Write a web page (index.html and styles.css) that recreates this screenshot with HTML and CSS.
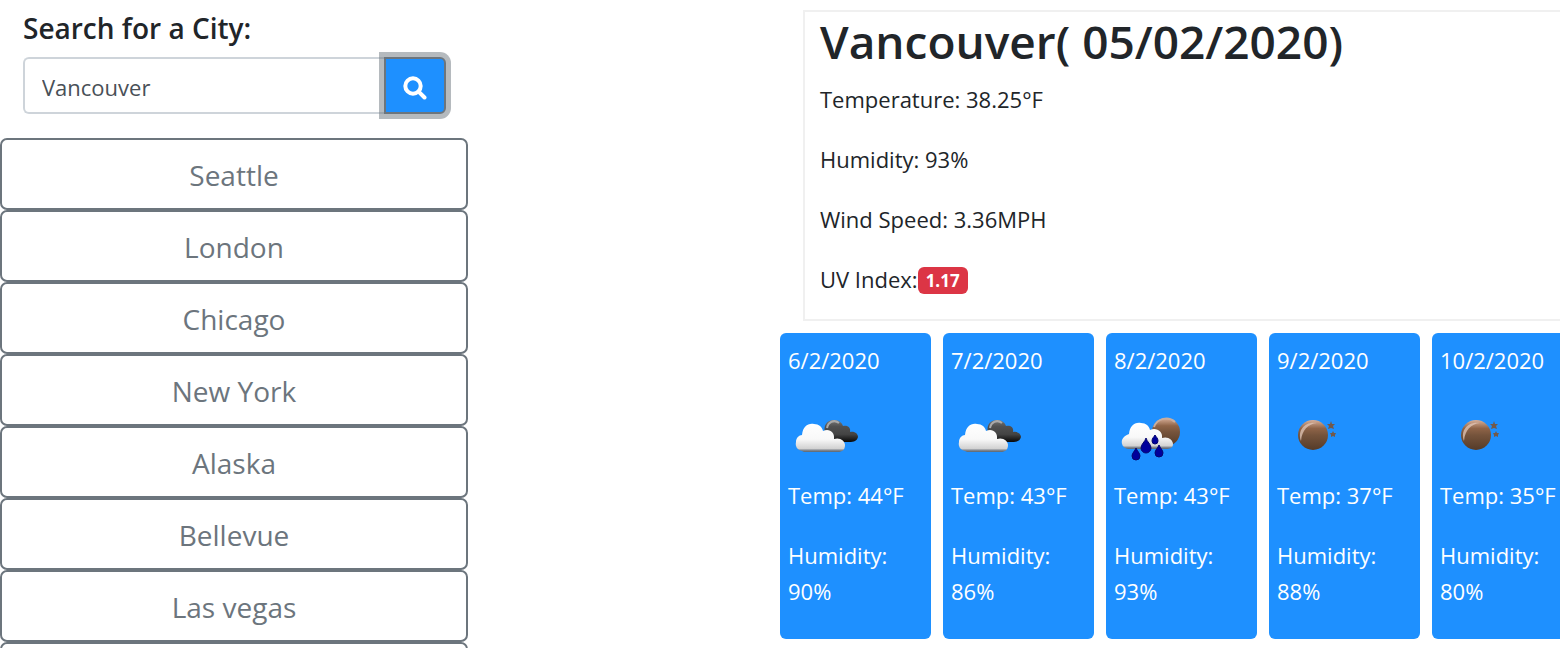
FILE: index.html
```html
<!DOCTYPE html>
<html lang="en">
<head>
<meta charset="utf-8">
<meta name="viewport" content="width=device-width, initial-scale=1">
<title>Weather Dashboard</title>
<link rel="stylesheet" href="styles.css">
</head>
<body>
<svg class="defs" aria-hidden="true">
  <defs>
    <linearGradient id="white" x1="0" y1="0" x2="0" y2="1"><stop offset="0" stop-color="#fff"/><stop offset=".55" stop-color="#f8f8f8"/><stop offset=".88" stop-color="#d2d2d2"/><stop offset=".93" stop-color="#8a8f96"/><stop offset="1" stop-color="#5a6470"/></linearGradient>
    <linearGradient id="dark" x1="0" y1="0" x2="0" y2="1"><stop offset="0" stop-color="#777"/><stop offset=".3" stop-color="#505050"/><stop offset=".65" stop-color="#444"/><stop offset="1" stop-color="#080808"/></linearGradient>
    <linearGradient id="moon" x1="0" y1="0" x2="0" y2="1"><stop offset="0" stop-color="#d9b09a"/><stop offset=".28" stop-color="#8f6448"/><stop offset=".5" stop-color="#76543c"/><stop offset="1" stop-color="#553b29"/></linearGradient>
    <symbol id="cloudy" viewBox="0 0 75 75">
      <path d="M37 32C35 23 39 18 46 18C51 18 54 21 55 24C60 23 63 26 62 30C67 29 70 32 70 35C69 39 66 40 61 40H44Z" fill="url(#dark)"/>
      <path d="M39 26C40 20 46 17 51 21" fill="none" stroke="#aaa" stroke-width="2"/>
      <path d="M14 49C9 48 7 44 8 40C8 36 11 33 14 33C15 24 20 21 26 22C31 22 34 25 35 29C41 26 47 30 46 37C52 35 57 39 57 43C57 48 54 50 50 50H16Z" fill="url(#white)"/>
    </symbol>
    <symbol id="rain" viewBox="0 0 75 75">
      <circle cx="52" cy="30" r="14" fill="url(#moon)"/>
      <path d="M40 25A13 13 0 0 1 61 20" fill="none" stroke="#c8ad9e" stroke-width="2"/>
      <path d="M14 47C9 46 7 42 8 38C9 35 12 33 15 32C16 24 20 20 27 21C32 21 35 24 36 28C42 25 49 29 48 36C54 34 59 38 59 42C59 46 56 47 52 47Z" fill="url(#white)"/>
      <g fill="#00009c" stroke="#05056f" stroke-width="1"><path d="M32 36C33 40 37 42 37 46A5 5 0 0 1 27 46C27 42 31 40 32 36Z"/><path d="M22 46C23 49 26 51 26 54A4 4 0 0 1 18 54C18 51 21 49 22 46Z"/><path d="M45 43C46 46 49 48 49 51A4 4 0 0 1 41 51C41 48 44 46 45 43Z"/><path d="M41 33C42 35 44 36 44 39A3 3 0 0 1 38 39C38 36 40 35 41 33Z"/></g>
    </symbol>
    <symbol id="night" viewBox="0 0 75 75">
      <circle cx="36" cy="33" r="15" fill="url(#moon)"/>
      <path d="M24 39C20 28 28 19 40 21C31 22 25 28 24 39Z" fill="#e3c8ba" opacity=".75"/>
      <path d="M54 19l1 3h3l-2 2 1 3-3-1-3 1 1-3-2-2h3zM56 29l1 2h2l-1 2v2l-2-1-2 1v-2l-1-2h2z" fill="#73594a"/>
    </symbol>
  </defs>
</svg>
<main class="dashboard">
  <aside class="sidebar">
    <form class="search">
      <label class="search-title" for="city">Search for a City:</label>
      <div class="search-group">
        <input class="search-input" id="city" type="text" value="Vancouver">
        <button class="search-button" type="button" aria-label="Search">
          <svg class="search-icon" viewBox="0 0 24 24" aria-hidden="true"><circle cx="10" cy="10" r="7.7"/><path d="M15.6 15.6L21.5 21.5"/></svg>
        </button>
      </div>
    </form>
    <nav class="cities" aria-label="Recent cities">
      <button class="city" type="button">Seattle</button>
      <button class="city" type="button">London</button>
      <button class="city" type="button">Chicago</button>
      <button class="city" type="button">New York</button>
      <button class="city" type="button">Alaska</button>
      <button class="city" type="button">Bellevue</button>
      <button class="city" type="button">Las vegas</button>
      <button class="city" type="button" aria-label="Recent city"></button>
    </nav>
  </aside>
  <section class="weather">
    <article class="current">
      <h1 class="current-title">Vancouver( 05/02/2020)</h1>
      <p class="line">Temperature: 38.25°F</p>
      <p class="line">Humidity: 93%</p>
      <p class="line">Wind Speed: 3.36MPH</p>
      <p class="line">UV Index:<span class="badge">1.17</span></p>
    </article>
    <div class="forecast">
      <article class="day"><p class="line">6/2/2020</p><svg class="day-icon"><use href="#cloudy"/></svg><p class="line">Temp: 44°F</p><p class="line">Humidity: 90%</p></article>
      <article class="day"><p class="line">7/2/2020</p><svg class="day-icon"><use href="#cloudy"/></svg><p class="line">Temp: 43°F</p><p class="line">Humidity: 86%</p></article>
      <article class="day"><p class="line">8/2/2020</p><svg class="day-icon"><use href="#rain"/></svg><p class="line">Temp: 43°F</p><p class="line">Humidity: 93%</p></article>
      <article class="day"><p class="line">9/2/2020</p><svg class="day-icon"><use href="#night"/></svg><p class="line">Temp: 37°F</p><p class="line">Humidity: 88%</p></article>
      <article class="day"><p class="line">10/2/2020</p><svg class="day-icon"><use href="#night"/></svg><p class="line">Temp: 35°F</p><p class="line">Humidity: 80%</p></article>
    </div>
  </section>
</main>
</body>
</html>
```
FILE: styles.css
```css
* { box-sizing: border-box; }
html, body { overflow-x: hidden; }
body {
  margin: 0;
  background: #fff;
  color: #212529;
  font: 22px/36px "Open Sans", "Noto Sans", sans-serif;
}
button, input { font: inherit; }
.defs { display: block; width: 0; height: 0; }
.dashboard { display: flex; justify-content: space-between; padding-top: 10px; }
.sidebar { width: 30%; }
.search { padding: 0 22px 24px 23px; }
.search-title { display: block; margin-bottom: 11px; font-size: 28px; font-weight: 600; }
.search-group { display: flex; }
.search-input {
  flex: 1;
  min-width: 0;
  height: 57px;
  padding: 10px 17px 8px;
  border: 2px solid #ced4da;
  border-right: 0;
  border-radius: 6px 0 0 6px;
  background: #fff;
  color: #495057;
}
.search-button {
  display: flex;
  align-items: center;
  justify-content: center;
  width: 62px;
  padding: 4px 0 0;
  border: 2px solid #6c757d;
  border-radius: 0 6px 6px 0;
  background: #1e90ff;
  box-shadow: 0 0 0 5px rgba(108, 117, 125, .5);
}
.search-icon { width: 24px; height: 24px; fill: none; stroke: #fff; stroke-width: 4; stroke-linecap: round; }
.cities { display: flex; flex-direction: column; }
.city {
  height: 72px;
  padding: 2px 12px 0;
  border: 2px solid #6c757d;
  border-radius: 7px;
  background: transparent;
  color: #6c757d;
  font-size: 28px;
  line-height: 45px;
}
.weather { width: 50%; }
.current { margin: 0 -24px 12px 23px; padding: 0 15px; border: 2px solid #f0f0f0; }
.current-title { margin: 0 0 11px; font-size: 46px; font-weight: 600; line-height: 58px; white-space: nowrap; }
.line { margin: 0 0 24px; }
.current .line:last-child { margin-bottom: 22px; }
.badge {
  display: inline-block;
  padding: 4px 8px;
  border-radius: 6px;
  background: #dc3545;
  color: #fff;
  font-size: 17px;
  font-weight: 700;
  line-height: 19px;
  vertical-align: 1px;
}
.forecast { display: grid; grid-template-columns: repeat(5, 1fr); gap: 12px; margin-right: -23px; }
.day { min-width: 0; padding: 9px 3px 6px 8px; border-radius: 6px; background: #1e90ff; color: #fff; }
.day-icon { display: block; width: 75px; height: 75px; }
```
